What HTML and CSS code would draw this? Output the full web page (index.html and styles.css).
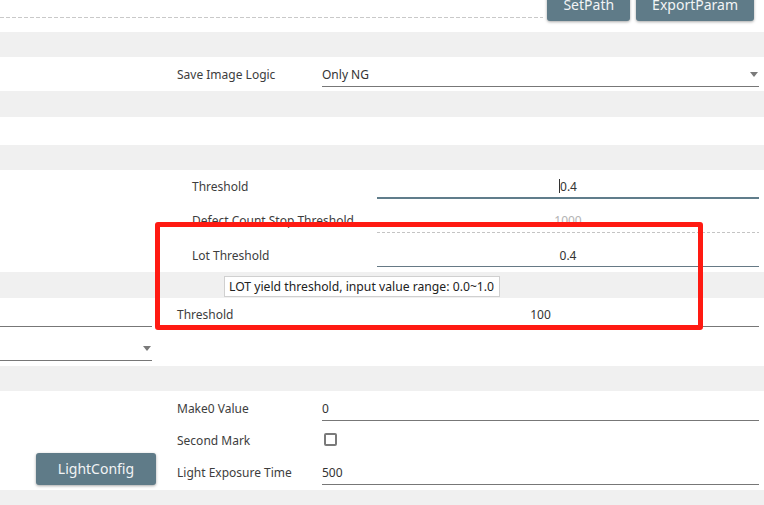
FILE: index.html
```html
<!DOCTYPE html>
<html>
<head>
<meta charset="utf-8">
<link rel="stylesheet" href="styles.css">
</head>
<body>
<div class="page">
  <div class="toolbar">
    <div class="dash"></div>
    <button class="btn">SetPath</button>
    <button class="btn">ExportParam</button>
  </div>
  <div class="band b25"></div>
  <div class="section h34">
    <div class="side"></div>
    <div class="fields">
      <div class="field">
        <span class="label">Save Image Logic</span>
        <div class="input select"><span>Only NG</span><span class="caret"></span></div>
      </div>
    </div>
  </div>
  <div class="band b26"></div>
  <div class="section h28"></div>
  <div class="band b25"></div>
  <div class="section h102">
    <div class="side"></div>
    <div class="fields indent">
      <div class="field">
        <span class="label">Threshold</span>
        <div class="input center focused"><span class="cursor"></span>0.4</div>
      </div>
      <div class="field">
        <span class="label">Defect Count Stop Threshold</span>
        <div class="input center disabled">1000</div>
      </div>
      <div class="field">
        <span class="label">Lot Threshold</span>
        <div class="input center blue">0.4</div>
      </div>
    </div>
  </div>
  <div class="band b26">
    <div class="tooltip">LOT yield threshold, input value range: 0.0~1.0</div>
  </div>
  <div class="section h68">
    <div class="side stack">
      <div class="side-input"></div>
      <div class="side-input select"><span></span><span class="caret"></span></div>
    </div>
    <div class="fields">
      <div class="field">
        <span class="label">Threshold</span>
        <div class="input center">100</div>
      </div>
    </div>
  </div>
  <div class="band b25"></div>
  <div class="section h99 light">
    <div class="side bottom">
      <button class="btn wide">LightConfig</button>
    </div>
    <div class="fields">
      <div class="field">
        <span class="label">Make0 Value</span>
        <div class="input">0</div>
      </div>
      <div class="field">
        <span class="label">Second Mark</span>
        <div class="checkwrap"><span class="check"></span></div>
      </div>
      <div class="field">
        <span class="label">Light Exposure Time</span>
        <div class="input">500</div>
      </div>
    </div>
  </div>
  <div class="band b15"></div>
  <div class="annot"></div>
</div>
</body>
</html>
```

FILE: styles.css
```css
html, body {
  margin: 0;
  padding: 0;
  background: #ffffff;
}
body {
  font-family: "Noto Sans", "Open Sans", sans-serif;
  font-size: 12px;
  color: #333333;
}
.page {
  position: relative;
  width: 764px;
  height: 505px;
  overflow: hidden;
}

/* toolbar */
.toolbar {
  display: flex;
  align-items: flex-start;
  height: 32px;
  padding-right: 10px;
}
.dash {
  flex: 1;
  height: 1px;
  margin-top: 17px;
  margin-right: 4px;
  background: repeating-linear-gradient(90deg, #c9c9c9 0 4px, transparent 4px 6px);
}
.btn {
  font-family: "Noto Sans", "Open Sans", sans-serif;
  font-size: 14px;
  color: #f2f4f5;
  background: #5f7b88;
  border: 0;
  border-radius: 3px;
  box-shadow: 0 1px 3px rgba(0, 0, 0, 0.35);
  height: 32px;
  line-height: 32px;
  padding: 0 16px;
  flex: none;
}
.toolbar .btn {
  margin-top: -11px;
}
.toolbar .btn + .btn {
  margin-left: 6px;
}

/* bands */
.band {
  position: relative;
  background: #f0f0f0;
}
.b25 { height: 25px; }
.b26 { height: 26px; }
.b15 { height: 15px; }

/* sections */
.section {
  display: flex;
}
.h34 { height: 34px; }
.h28 { height: 28px; }
.h102 { height: 102px; }
.h68 { height: 68px; }
.h99 { height: 99px; }

.side {
  width: 152px;
  flex: none;
}
.fields {
  flex: 1;
  padding: 0 5px 0 25px;
}
.field {
  display: flex;
  height: 34px;
}
.h34 .field {
  padding-top: 1px;
  box-sizing: border-box;
}
.label {
  width: 145px;
  flex: none;
  padding-top: 7px;
  line-height: 20px;
  color: #3d3d3d;
  white-space: nowrap;
}
.indent .label {
  margin-left: 15px;
  width: 185px;
}
.input {
  flex: 1;
  box-sizing: border-box;
  height: 29px;
  padding-top: 7px;
  line-height: 20px;
  border-bottom: 1px solid #777777;
  color: #333333;
}
.center {
  text-align: center;
}
.focused {
  border-bottom: 2px solid #607d8b;
}
.cursor {
  display: inline-block;
  width: 1px;
  height: 14px;
  background: #333333;
  vertical-align: -2px;
}
.disabled {
  color: #b3b3b3;
  border-bottom: 0;
  background: repeating-linear-gradient(90deg, #c4c4c4 0 3px, transparent 3px 5px) left bottom / 100% 1px no-repeat;
}
.blue {
  border-bottom-color: #667985;
}
.indent .field:last-child .label,
.indent .field:last-child .input {
  padding-top: 8px;
}

.select {
  display: flex;
  justify-content: space-between;
}
.caret {
  width: 0;
  height: 0;
  margin-top: 7px;
  margin-right: 1px;
  border-left: 4px solid transparent;
  border-right: 4px solid transparent;
  border-top: 5px solid #7a7a7a;
}

/* left column of threshold block */
.stack {
  display: flex;
  flex-direction: column;
}
.side-input {
  box-sizing: border-box;
  height: 29px;
  padding-top: 7px;
  line-height: 20px;
  border-bottom: 1px solid #777777;
  margin-bottom: 5px;
}

/* tooltip */
.tooltip {
  position: absolute;
  left: 224px;
  top: 4px;
  height: 21px;
  box-sizing: border-box;
  border: 1px solid #d0d0d0;
  background: #ffffff;
  padding: 0 5px 0 4px;
  line-height: 19px;
  font-size: 12.2px;
  color: #222222;
  white-space: nowrap;
}

/* light section */
.light .fields {
  padding-top: 3px;
}
.light .field {
  height: 32px;
}
.light .label {
  padding-top: 5px;
}
.light .input {
  height: 27px;
  padding-top: 5px;
}
.checkwrap {
  flex: 1;
}
.check {
  display: block;
  width: 13px;
  height: 13px;
  margin: 7px 0 0 2px;
  box-sizing: border-box;
  border: 2px solid #7a7a7a;
  border-radius: 2px;
}
.bottom {
  display: flex;
  align-items: flex-end;
  padding-bottom: 5px;
  box-sizing: border-box;
}
.btn.wide {
  width: 120px;
  margin-left: 36px;
  padding: 0;
}

/* annotation */
.annot {
  position: absolute;
  left: 155px;
  top: 222px;
  width: 548px;
  height: 108px;
  box-sizing: border-box;
  border: 5px solid #ff1a12;
  border-radius: 3px;
  pointer-events: none;
}
```
